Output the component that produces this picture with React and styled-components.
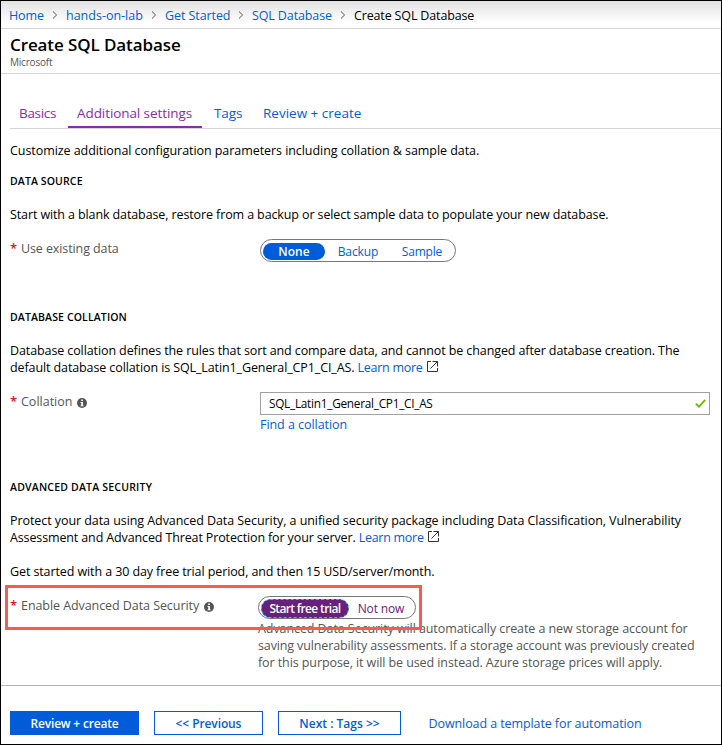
import React from "react";
import styled, { createGlobalStyle, css } from "styled-components";

const blue = "#015cda";
const purple = "#8a2da5";

const Global = createGlobalStyle`
  * { box-sizing: border-box; }
  body {
    margin: 0;
    background: #fff;
    color: #000;
    font: 12.5px/17px "Open Sans", "Noto Sans", sans-serif;
  }
`;

const Blade = styled.div`
  width: 722px;
  height: 745px;
  border: 1px solid #000;
  display: flex;
  flex-direction: column;
  white-space: nowrap;
`;

const Breadcrumb = styled.nav`
  height: 28px;
  flex: none;
  display: flex;
  align-items: center;
  padding: 1px 0 0 8px;
  border-bottom: 1px solid #d4d4d4;
  background: linear-gradient(#e2e2e2, #fff 22px);
`;

const Crumb = styled.a`
  width: ${(p) => p.$w}px;
  color: ${(p) => (p.$current ? "#000" : blue)};
  letter-spacing: ${(p) => p.$ls || 0}px;
`;

const CrumbArrow = styled.svg`
  width: 6px;
  height: 8px;
  margin: 0 8px;
  fill: none;
  stroke: #555;
`;

const Header = styled.header`
  height: 45px;
  flex: none;
  padding: 6px 9px 0;
  border-bottom: 1px solid #d4d4d4;
`;

const Title = styled.h1`
  margin: 0;
  font-size: 17px;
  line-height: 20px;
  font-weight: 600;
  letter-spacing: -0.1px;
`;

const Publisher = styled.div`
  font-size: 10px;
  line-height: 15px;
  letter-spacing: -0.2px;
  color: #555;
`;

const Tabs = styled.div`
  height: 55px;
  flex: none;
  margin-left: 9px;
  border-bottom: 1px solid #d4d4d4;
  display: flex;
  align-items: flex-end;
`;

const Tab = styled.a`
  height: 25px;
  width: ${(p) => p.$w}px;
  padding-left: ${(p) => p.$pad || 9}px;
  font-size: 13.5px;
  line-height: 20px;
  letter-spacing: ${(p) => p.$ls || 0}px;
  color: ${(p) => (p.$visited ? purple : blue)};
  border-bottom: 2px solid ${(p) => (p.$active ? purple : "transparent")};
`;

const Form = styled.main`
  flex: 1;
  padding: 13px 11px 0 9px;
`;

const Heading = styled.h2`
  margin: ${(p) => p.$mt}px 0 0;
  font-size: 10.5px;
  line-height: 17px;
  font-weight: 600;
  letter-spacing: ${(p) => p.$ls || 0}px;
`;

const Para = styled.p`
  margin: ${(p) => p.$mt ?? 16}px 0 0;
`;

const Line = styled.span`
  display: block;
  letter-spacing: ${(p) => p.$ls || 0}px;
`;

const Link = styled.a`
  color: ${blue};
  letter-spacing: -0.28px;
`;

const Field = styled.div`
  position: relative;
  display: grid;
  grid-template-columns: ${(p) => p.$label ?? 250}px 1fr;
  margin-top: 16px;
`;

const Label = styled.label`
  display: flex;
  height: 17px;
  margin-top: 1px;
  color: #555;
  letter-spacing: ${(p) => p.$ls || 0}px;
`;

const Star = styled.span`
  width: 11px;
  flex: none;
  color: #e81123;
  font-size: 13px;
  font-weight: 600;
  letter-spacing: 0;
`;

const Info = styled.svg`
  width: 10px;
  height: 10px;
  margin: 5px 0 0 5px;
`;

const Pill = styled.div`
  display: flex;
  width: ${(p) => p.$w}px;
  height: 23px;
  padding: 2px;
  border: 1px solid #777;
  border-radius: 12px;
`;

const Option = styled.div`
  width: ${(p) => p.$w}px;
  height: ${(p) => (p.$focus ? 19 : 17)}px;
  margin-top: ${(p) => (p.$focus ? 0 : 0.5)}px;
  border-radius: 10px;
  text-align: center;
  font-size: 12px;
  line-height: 17px;
  letter-spacing: ${(p) => p.$ls || 0}px;
  color: ${(p) => p.$color || blue};
  ${(p) =>
    p.$on &&
    css`
      background: ${p.$on};
      color: #fff;
      font-weight: 600;
    `}
  ${(p) =>
    p.$focus &&
    css`
      border: 1px dashed #19c4ff;
    `}
`;

const Input = styled.div`
  height: 23px;
  border: 1px solid #a0a0a0;
  padding: 0 3px 0 8px;
  display: flex;
  align-items: center;
  justify-content: space-between;
  font-size: 11.8px;
  letter-spacing: -0.26px;
`;

const Below = styled.div`
  margin-top: 1px;
  color: ${(p) => (p.$link ? blue : "#555")};
  letter-spacing: ${(p) => p.$ls || 0}px;
`;

const Highlight = styled.div`
  position: absolute;
  left: -5px;
  top: -11px;
  width: 417px;
  height: 45px;
  border: 3px solid #fa5b4c;
`;

const Footer = styled.footer`
  height: 59px;
  flex: none;
  border-top: 1px solid #b5b5b5;
  padding: 25px 0 0 9px;
  display: flex;
  gap: 15px;
`;

const Button = styled.button`
  width: ${(p) => p.$w}px;
  height: 24px;
  padding: 2px 0 0;
  border: 1px solid ${blue};
  background: ${(p) => (p.$primary ? blue : "#fff")};
  color: ${(p) => (p.$primary ? "#fff" : blue)};
  font: 600 12px/20px "Open Sans", "Noto Sans", sans-serif;
  letter-spacing: ${(p) => p.$ls || 0}px;
`;

const Download = styled.a`
  margin-left: 12.5px;
  line-height: 26px;
  color: ${blue};
  letter-spacing: -0.09px;
`;

const Arrow = () => (
  <CrumbArrow viewBox="0 0 6 8">
    <path d="M1 0.5 L4.6 4 L1 7.5" />
  </CrumbArrow>
);

const InfoIcon = () => (
  <Info viewBox="0 0 10 10">
    <circle cx="5" cy="5" r="5" fill="#555" />
    <path d="M4.2 1.6h1.7v1.5H4.2z M3.5 4h2.4v3.4h.8v.9H3.4v-.9h.8V4.9h-.7z" fill="#fff" />
  </Info>
);

const External = styled.svg`
  width: 11px;
  height: 11px;
  margin-left: 4px;
  fill: none;
  stroke: #333;
`;

const ExternalIcon = () => (
  <External viewBox="0 0 11 11">
    <path d="M4 .5H.5v10h10V7 M5.5 .5h5v5 M10.5 .5L3.5 7.5" />
  </External>
);

export default function App() {
  return (
    <>
      <Global />
      <Blade>
        <Breadcrumb>
          <Crumb $w={35} $ls={-0.1}>Home</Crumb>
          <Arrow />
          <Crumb $w={77}>hands-on-lab</Crumb>
          <Arrow />
          <Crumb $w={65} $ls={-0.08}>Get Started</Crumb>
          <Arrow />
          <Crumb $w={80} $ls={-0.12}>SQL Database</Crumb>
          <Arrow />
          <Crumb $w={122} $ls={-0.15} $current>Create SQL Database</Crumb>
        </Breadcrumb>
        <Header>
          <Title>Create SQL Database</Title>
          <Publisher>Microsoft</Publisher>
        </Header>
        <Tabs>
          <Tab $w={58} $ls={-0.3} $visited>Basics</Tab>
          <Tab $w={134} $ls={-0.08} $visited $active>Additional settings</Tab>
          <Tab $w={52} $pad={12} $ls={-0.1}>Tags</Tab>
          <Tab $w={120}>Review + create</Tab>
        </Tabs>
        <Form>
          <Para $mt={0}>
            <Line $ls={-0.062}>Customize additional configuration parameters including collation &amp; sample data.</Line>
          </Para>
          <Heading $mt={14} $ls={0.12}>DATA SOURCE</Heading>
          <Para>
            <Line $ls={-0.112}>Start with a blank database, restore from a backup or select sample data to populate your new database.</Line>
          </Para>
          <Field>
            <Label $ls={-0.1}><Star>*</Star>Use existing data</Label>
            <Pill $w={196}>
              <Option $w={62} $on={blue}>None</Option>
              <Option $w={66} $ls={-0.1}>Backup</Option>
              <Option $w={62} $ls={-0.2}>Sample</Option>
            </Pill>
          </Field>
          <Heading $mt={47} $ls={0.13}>DATABASE COLLATION</Heading>
          <Para>
            <Line $ls={-0.103}>Database collation defines the rules that sort and compare data, and cannot be changed after database creation. The</Line>
            <Line $ls={-0.105}>default database collation is SQL_Latin1_General_CP1_CI_AS. <Link>Learn more</Link><ExternalIcon /></Line>
          </Para>
          <Field>
            <Label><Star>*</Star>Collation<InfoIcon /></Label>
            <div>
              <Input>
                SQL_Latin1_General_CP1_CI_AS
                <svg width="11" height="9" viewBox="0 0 11 9" fill="none" stroke="#6bb700" strokeWidth="1.8">
                  <path d="M.8 4.6L4 7.7L10.2 .9" />
                </svg>
              </Input>
              <Below $link $ls={-0.05}>Find a collation</Below>
            </div>
          </Field>
          <Heading $mt={46} $ls={0.2}>ADVANCED DATA SECURITY</Heading>
          <Para>
            <Line $ls={-0.067}>Protect your data using Advanced Data Security, a unified security package including Data Classification, Vulnerability</Line>
            <Line $ls={-0.13}>Assessment and Advanced Threat Protection for your server. <Link>Learn more</Link><ExternalIcon /></Line>
          </Para>
          <Para $mt={17}>
            <Line $ls={-0.1}>Get started with a 30 day free trial period, and then 15 USD/server/month.</Line>
          </Para>
          <Field $label={248}>
            <Label $ls={-0.07}><Star>*</Star>Enable Advanced Data Security<InfoIcon /></Label>
            <div>
              <Pill $w={158}>
                <Option $w={89} $ls={-0.65} $on="#68217a" $focus>Start free trial</Option>
                <Option $w={65} $ls={-0.15} $color="#68217a">Not now</Option>
              </Pill>
              <Below>
                <Line $ls={-0.08}>Advanced Data Security will automatically create a new storage account for</Line>
                <Line $ls={-0.13}>saving vulnerability assessments. If a storage account was previously created</Line>
                <Line $ls={-0.09}>for this purpose, it will be used instead. Azure storage prices will apply.</Line>
              </Below>
            </div>
            <Highlight />
          </Field>
        </Form>
        <Footer>
          <Button $w={129} $ls={-0.2} $primary>Review + create</Button>
          <Button $w={109} $ls={-0.1}>&lt;&lt; Previous</Button>
          <Button $w={123}>Next : Tags &gt;&gt;</Button>
          <Download>Download a template for automation</Download>
        </Footer>
      </Blade>
    </>
  );
}
